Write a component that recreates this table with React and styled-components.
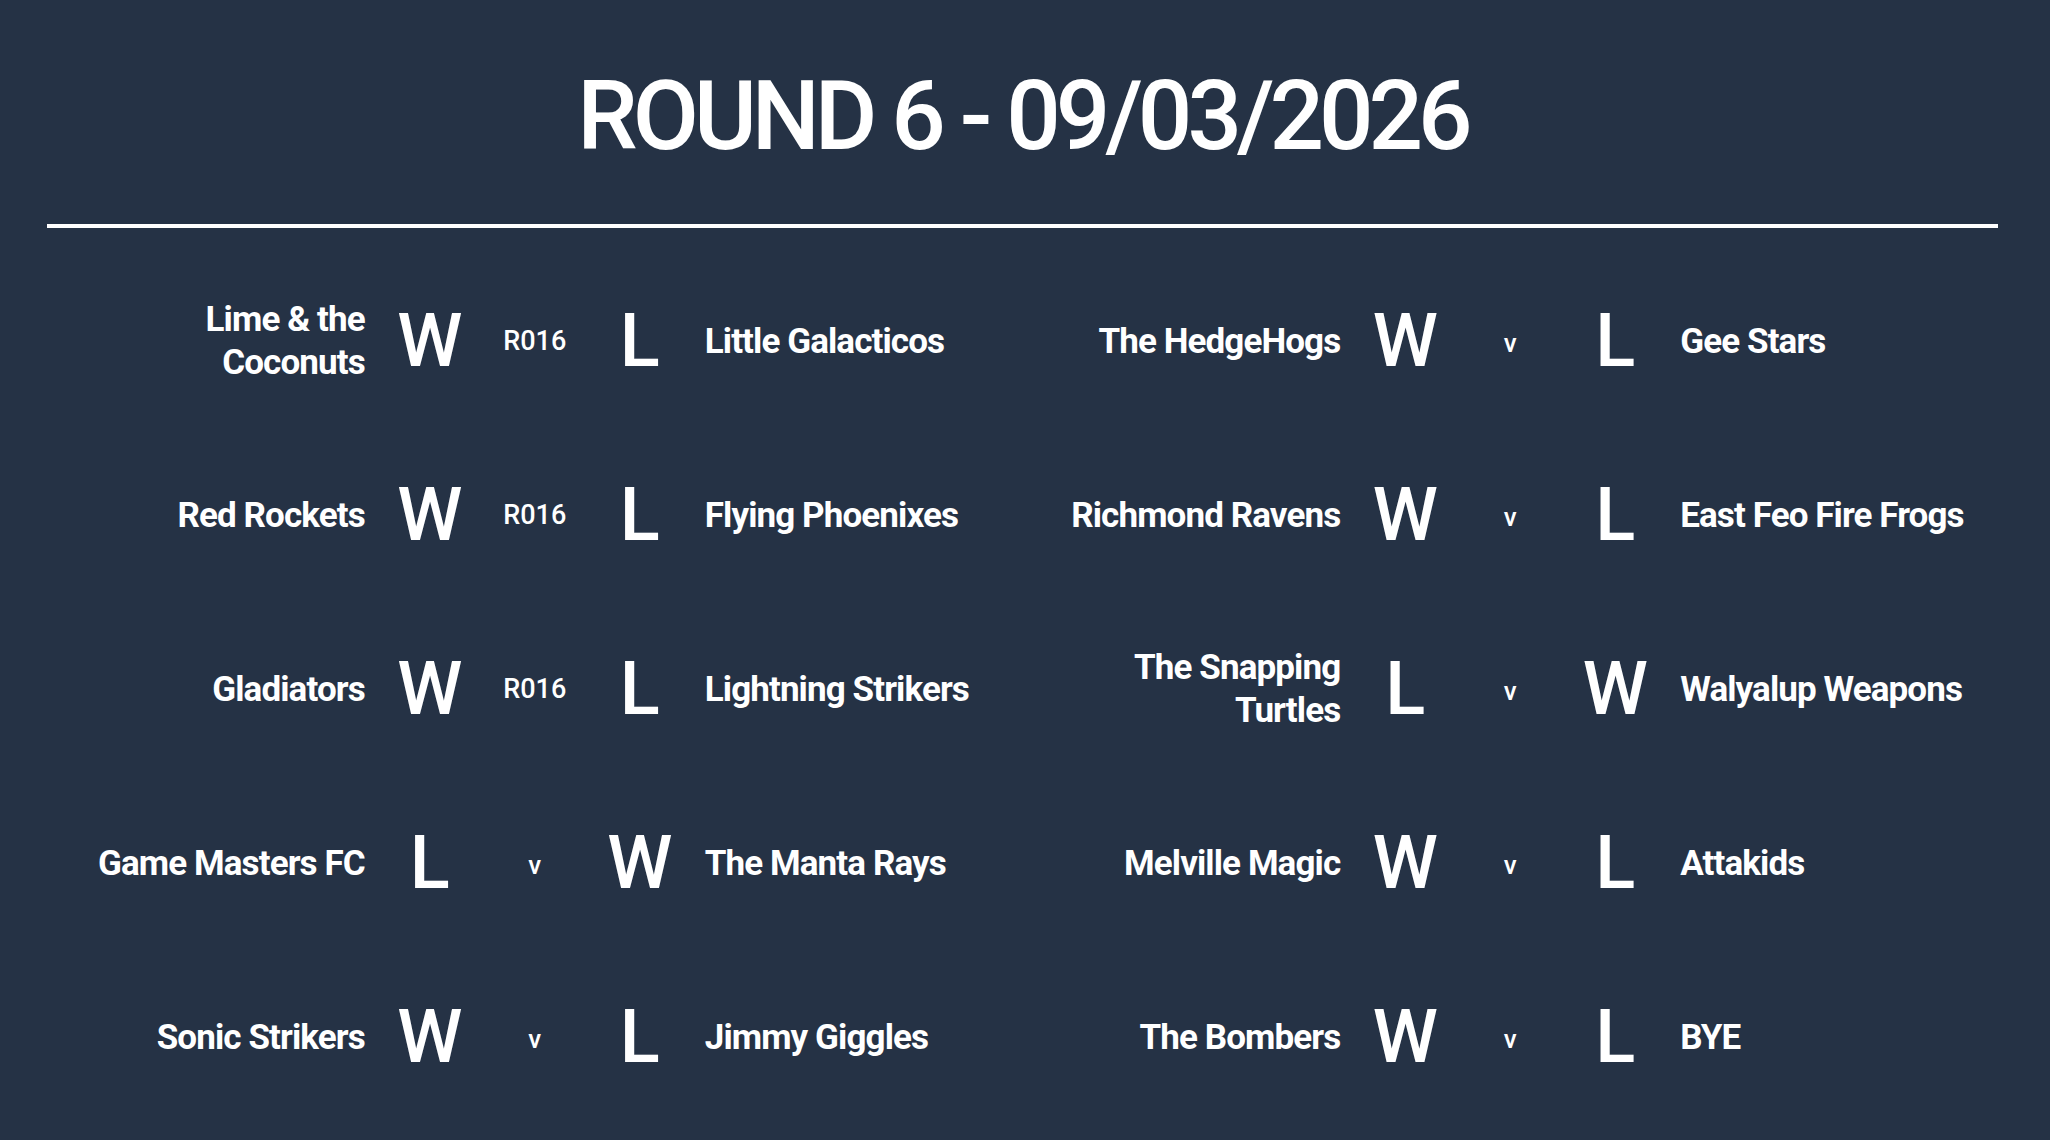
import React from "react";
import styled, { createGlobalStyle } from "styled-components";

const GlobalStyle = createGlobalStyle`
  html, body {
    margin: 0;
    padding: 0;
    background: #253245;
  }
  body {
    font-family: Roboto, "Liberation Sans", sans-serif;
    color: #ffffff;
  }
`;

const Page = styled.div`
  width: 2050px;
  height: 1140px;
  box-sizing: border-box;
  padding: 68px 52px 0 47px;
  background: #253245;
  overflow: hidden;
`;

const Title = styled.h1`
  margin: 0;
  font-size: 96px;
  line-height: 1;
  font-weight: 500;
  letter-spacing: -5px;
  text-align: center;
`;

const Divider = styled.hr`
  margin: 60px 0 0;
  border: none;
  height: 4px;
  background: #ffffff;
`;

const Board = styled.div`
  margin-top: 26px;
  display: grid;
  grid-template-columns: 1fr 1fr;
  grid-auto-rows: 174px;
`;

const Match = styled.div`
  display: grid;
  grid-template-columns: 1fr 130px 80px 130px 1fr;
  align-items: center;
`;

const Team = styled.div`
  font-size: 35px;
  font-weight: 700;
  letter-spacing: -0.9px;
  line-height: 43px;
  max-width: 292px;
  justify-self: ${(p) => (p.$side === "home" ? "end" : "start")};
  text-align: ${(p) => (p.$side === "home" ? "right" : "left")};
`;

const Result = styled.div`
  font-size: 74px;
  font-weight: 500;
  line-height: 1;
  text-align: center;
`;

const Middle = styled.div`
  font-size: ${(p) => (p.$code ? "27px" : "26px")};
  font-weight: 500;
  line-height: 1;
  text-align: center;
  padding-top: ${(p) => (p.$code ? "0" : "4px")};
`;

const left = [
  ["Lime & the Coconuts", "W", "R016", "L", "Little Galacticos"],
  ["Red Rockets", "W", "R016", "L", "Flying Phoenixes"],
  ["Gladiators", "W", "R016", "L", "Lightning Strikers"],
  ["Game Masters FC", "L", "v", "W", "The Manta Rays"],
  ["Sonic Strikers", "W", "v", "L", "Jimmy Giggles"],
];

const right = [
  ["The HedgeHogs", "W", "v", "L", "Gee Stars"],
  ["Richmond Ravens", "W", "v", "L", "East Feo Fire Frogs"],
  ["The Snapping Turtles", "L", "v", "W", "Walyalup Weapons"],
  ["Melville Magic", "W", "v", "L", "Attakids"],
  ["The Bombers", "W", "v", "L", "BYE"],
];

const Row = ({ m }) => {
  const [home, hr, mid, ar, away] = m;
  return (
    <Match>
      <Team $side="home">{home}</Team>
      <Result>{hr}</Result>
      <Middle $code={mid !== "v"}>{mid}</Middle>
      <Result>{ar}</Result>
      <Team $side="away">{away}</Team>
    </Match>
  );
};

const App = () => {
  const rows = [];
  for (let i = 0; i < left.length; i++) {
    rows.push(<Row key={"l" + i} m={left[i]} />);
    rows.push(<Row key={"r" + i} m={right[i]} />);
  }
  return (
    <Page>
      <GlobalStyle />
      <Title>ROUND 6 - 09/03/2026</Title>
      <Divider />
      <Board>{rows}</Board>
    </Page>
  );
};

export default App;
